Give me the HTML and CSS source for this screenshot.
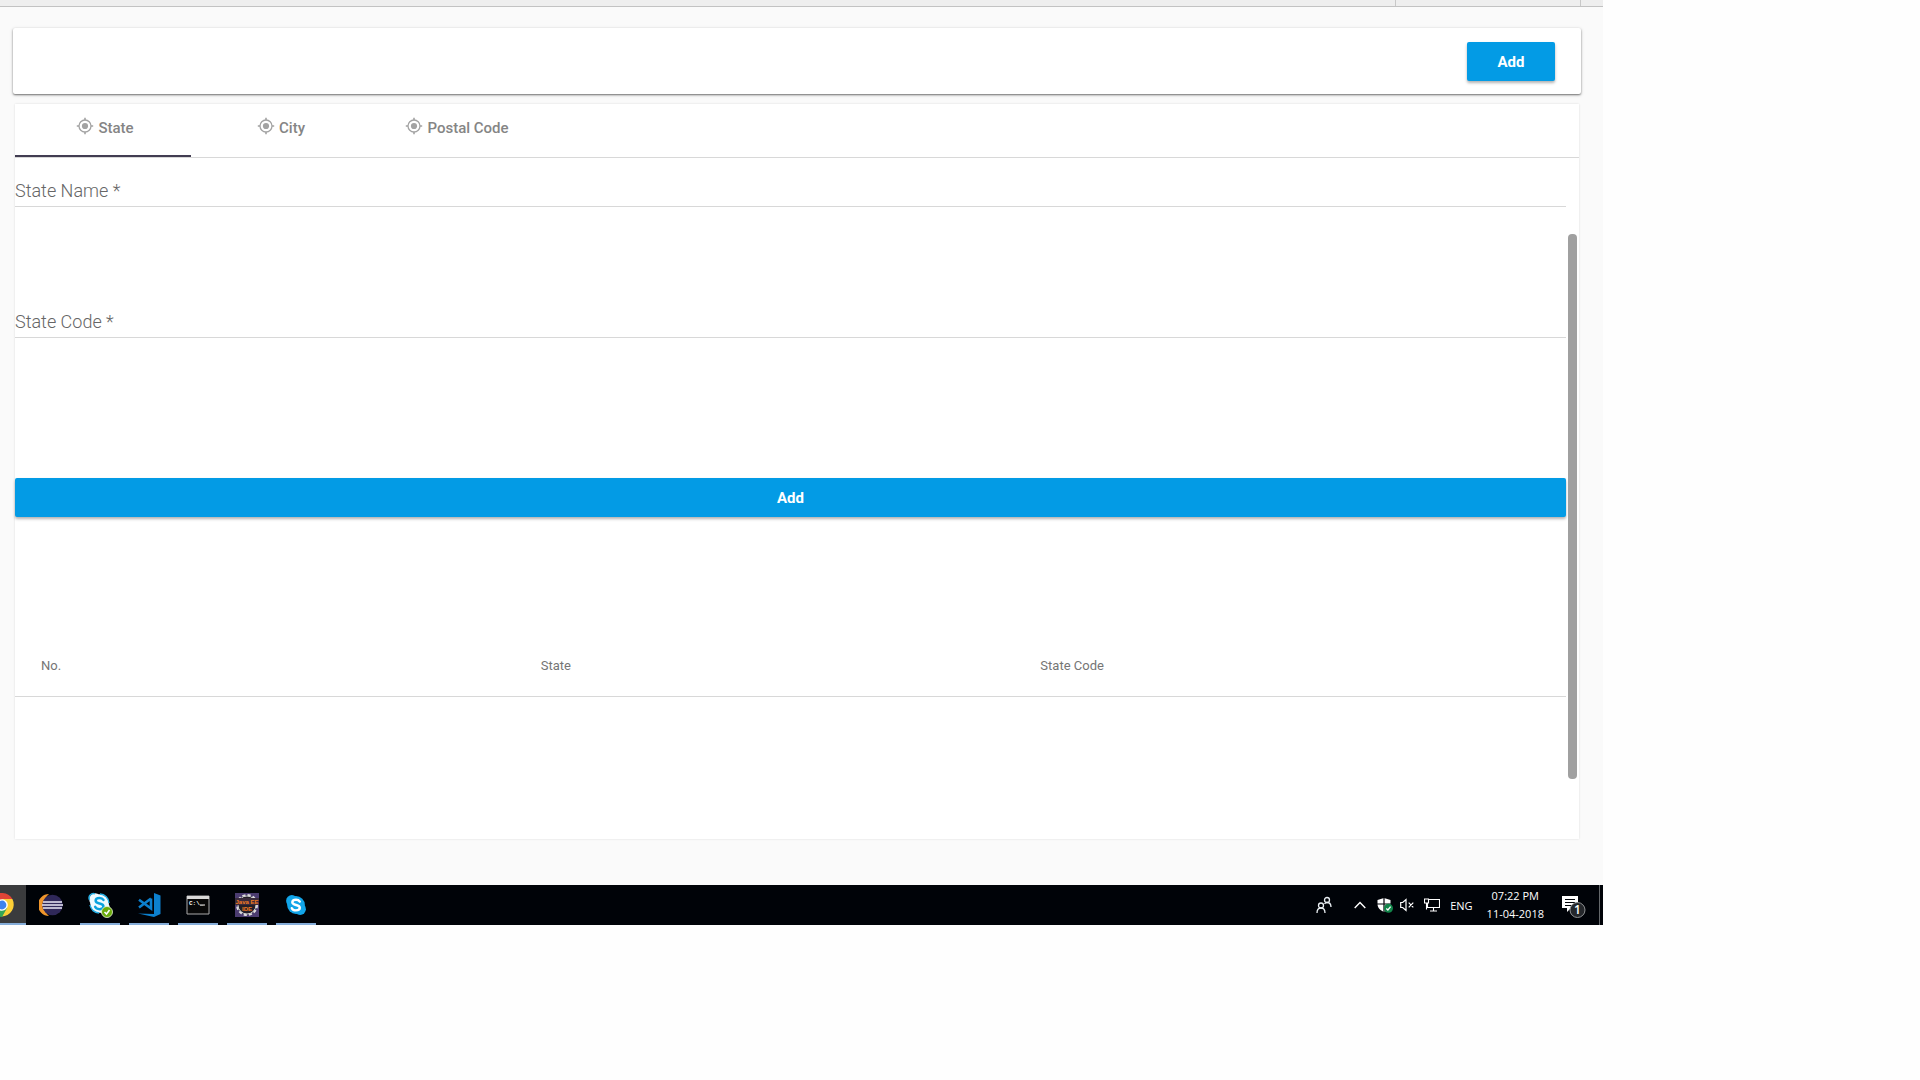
FILE: index.html
```html
<!DOCTYPE html>
<html lang="en">
<head>
<meta charset="utf-8">
<title>State, City and Postal Code</title>
<link rel="stylesheet" href="styles.css">
</head>
<body>
<svg class="defs" aria-hidden="true">
  <symbol id="target" viewBox="0 0 18 18">
    <circle cx="9" cy="9" r="6" fill="none" stroke="currentColor" stroke-width="1.3"/>
    <circle cx="9" cy="9" r="3.1" fill="currentColor"/>
    <path d="M9 .8V3M9 15v2.2M.8 9H3M15 9h2.2" stroke="currentColor" stroke-width="1.6"/>
  </symbol>
  <symbol id="skype" viewBox="0 0 24 24">
    <circle cx="7.5" cy="7.5" r="6.3"/><circle cx="16.5" cy="16.5" r="6.3"/><circle cx="12" cy="12" r="9.7"/>
  </symbol>
  <symbol id="skype-s" viewBox="0 0 24 24">
    <path d="M15.8 8.6C15 7.3 13.700 6.700 12 6.700c-2.200 0-3.700 1-3.700 2.600 0 1.800 1.700 2.200 3.700 2.700s3.800.9 3.800 2.800c0 1.700-1.600 2.600-3.800 2.600-1.900 0-3.500-.7-4.200-2.200" fill="none" stroke-width="2.4" stroke-linecap="round"/>
  </symbol>
</svg>
<div class="screen">
  <div class="strip"><span class="strip-cell"></span><span class="strip-end"></span></div>
  <main class="app">
    <header class="toolbar"><button class="btn" type="button">Add</button></header>
    <section class="panel">
      <div class="tabs" role="tablist">
        <button class="tab active" role="tab" aria-selected="true" type="button"><svg class="tab-icon"><use href="#target"/></svg>State</button>
        <button class="tab" role="tab" aria-selected="false" type="button"><svg class="tab-icon"><use href="#target"/></svg>City</button>
        <button class="tab" role="tab" aria-selected="false" type="button"><svg class="tab-icon"><use href="#target"/></svg>Postal Code</button>
      </div>
      <div class="panel-body">
        <form class="content">
          <div class="field"><label for="state-name">State Name *</label><input id="state-name" type="text"></div>
          <div class="field"><label for="state-code">State Code *</label><input id="state-code" type="text"></div>
          <button class="btn btn-wide" type="button">Add</button>
          <table class="list">
            <thead><tr><th scope="col">No.</th><th scope="col">State</th><th scope="col">State Code</th></tr></thead>
          </table>
        </form>
        <div class="scroll"><div class="thumb"></div></div>
      </div>
    </section>
  </main>
  <footer class="taskbar">
    <button class="task task-chrome" type="button" aria-label="Chrome">
      <svg width="26" height="24" viewBox="0 0 26 24"><path d="M2 12 -8.400 6A12 12 0 0 1 12.400 6Z" fill="#e04436"/><path d="M2 6h10.400A12 12 0 0 1 1.500 23.500L7 14.500Z" fill="#fbce36"/><path d="M2 12 7 15 2 24A12 12 0 0 1-8.400 6Z" fill="#35a556"/><circle cx="2" cy="12" r="5.800" fill="#fff"/><circle cx="2" cy="12" r="4.400" fill="#3f83ee"/></svg>
    </button>
    <button class="task" type="button" aria-label="Eclipse">
      <svg width="24" height="24" viewBox="0 0 24 24"><path d="M10 1A11 11 0 0 0 10 23 14 14 0 0 1 10 1Z" fill="#f0962c"/><circle cx="13.500" cy="12" r="10.300" fill="#2f2859"/><path d="M4 9h19M3 12h21M4 15h19" stroke="#ece9f7" stroke-width="1.600"/></svg>
    </button>
    <button class="task open" type="button" aria-label="Skype for Business">
      <svg width="26" height="26" viewBox="0 0 26 26"><use href="#skype" width="23" height="23" x="1" fill="#effaff"/><use href="#skype-s" width="25" height="25" y="-1" stroke="#08a2df"/><path d="M8 1.800A4.500 4.500 0 0 0 2.500 8M3 13a9.500 9.500 0 0 0 9 8M13 2a9.500 9.500 0 0 1 9 9" fill="none" stroke="#27b2e8" stroke-width="1.400"/><circle cx="20" cy="20" r="5.500" fill="#6bac0b" stroke="#e9f5d7" stroke-width=".8"/><path d="m17.500 20 2 2 3-4" fill="none" stroke="#fff" stroke-width="1.500"/></svg>
    </button>
    <button class="task open" type="button" aria-label="Visual Studio Code">
      <svg width="24" height="24" viewBox="0 0 24 24"><path d="M17 0 23.500 2.500V21L17 24 1 20.500 17 21Z" fill="#0c80ce"/><path d="M14 5.500v10L2 6.800M2 14.500 14 5.500" fill="none" stroke="#0c80ce" stroke-width="2.600"/></svg>
    </button>
    <button class="task open" type="button" aria-label="Command Prompt">
      <svg width="24" height="20" viewBox="0 0 24 20"><path d="M1 1h22v18H1z" fill="#080808" stroke="#aaa"/><path d="M1 1h22v3H1z" fill="#d8d8d8"/><text x="3" y="10" class="prompt">C:\_</text><path d="M14 10h5" stroke="#eee"/></svg>
    </button>
    <button class="task open" type="button" aria-label="Java EE IDE">
      <svg width="24" height="24" viewBox="0 0 24 24"><path d="M0 0h24v24H0z" fill="#4b3c70"/><circle cx="12" cy="12" r="9.500" fill="#222" stroke="#ddd" stroke-width="3" stroke-dasharray="3 2"/><circle cx="12" cy="12" r="9" fill="#241f28" stroke="#ccc"/><path d="M0 5h24v7H0z" fill="#3a2b3c"/><text x="12" y="11" class="java">Java EE</text><text x="12" y="18" class="java">IDE</text></svg>
    </button>
    <button class="task open" type="button" aria-label="Skype">
      <svg width="24" height="24" viewBox="0 0 24 24"><use href="#skype" width="22" height="22" x="1" y="1" fill="#12a5e9"/><use href="#skype-s" width="24" height="24" stroke="#fff"/></svg>
    </button>
    <div class="tray">
      <svg class="people" width="16" height="18" viewBox="0 0 16 18"><g fill="none" stroke="#e8eef2" stroke-width="1.300"><circle cx="5" cy="9.500" r="2.500"/><path d="M1 17c0-3 1.500-5 4-5s4 2 4 5"/><circle cx="11" cy="4" r="2.500"/><path d="M8.500 8c.7-1 1.500-1.500 2.500-1.500 2.500 0 4 2 4 4.500"/></g></svg>
      <svg class="chevron" width="12" height="8" viewBox="0 0 12 8"><path d="m.7 7 5.300-5.500L11.300 7" fill="none" stroke="#fff" stroke-width="1.400"/></svg>
      <svg class="shield" width="16" height="16" viewBox="0 0 16 16"><path d="M7 1 .500 3v4c0 3.500 2.500 6.500 6.500 8 4-1.500 6.500-4.500 6.500-8V3Z" fill="#fff"/><path d="M7 0v15M0 7h14" stroke="#000308" stroke-width="1.200"/><circle cx="11.500" cy="11.300" r="4.500" fill="#12854a"/><path d="m9.300 11.500 1.600 1.500 2.700-3.300" fill="none" stroke="#fff" stroke-width="1.300"/></svg>
      <svg class="speaker" width="14" height="14" viewBox="0 0 14 14"><path d="M.700 4.500h2L6 1.500v11L2.700 9.500h-2ZM8.700 4.700l4.600 4.600m0-4.600L8.700 9.300" fill="none" stroke="#fff" stroke-width="1.200"/></svg>
      <svg class="monitor" width="16" height="14" viewBox="0 0 16 14"><path d="M5 1.500h10.500v8H3.500V5M9.500 9.500v3.500M6 13h7M.500 1h4v4h-4zM2.500 5v6.500" fill="none" stroke="#fff" stroke-width="1.100"/></svg>
      <span class="lang">ENG</span>
      <time class="clock"><span>07:22 PM</span><span>11-04-2018</span></time>
      <svg width="24" height="26" viewBox="0 0 24 26"><path d="M0 4h16v12H9l-4 4v-4H0z" fill="#fff"/><path d="M3 7.500h10M3 10.500h10M3 13.500h7" stroke="#000308" stroke-width="1.200"/><circle cx="15.500" cy="18" r="7.500" fill="#24272b" stroke="#8f9294"/><text x="15.500" y="22" class="badge">1</text></svg>
    </div>
  </footer>
</div>
</body>
</html>
```
FILE: styles.css
```css
* { box-sizing: border-box; }
body { margin: 0; background: #fefefe; font-family: Roboto, sans-serif; color: #757575; }
button { border: 0; font-family: inherit; cursor: pointer; }
svg { display: block; flex: none; }
.defs { position: absolute; width: 0; height: 0; }
.screen { margin-right: 317px; }

.strip { display: flex; justify-content: flex-end; height: 7px; background: #eee; border-bottom: 1px solid #c2c2c2; }
.strip-cell { width: 186px; border: solid #c8c8c8; border-width: 0 1px; }
.strip-end { width: 22px; }

.app { padding: 21px 22px 46px 13px; background: #fafafa; }
.toolbar { display: flex; justify-content: flex-end; padding: 14px 26px 13px; background: #fff; border-radius: 2px; box-shadow: 0 1px 2px rgba(0,0,0,.5), 0 1px 4px rgba(0,0,0,.12); }
.btn { width: 88px; height: 39px; padding: 0; border-radius: 2px; background: #039be5; color: #fff; font-size: 15px; font-weight: 700; box-shadow: 0 2px 3px rgba(0,0,0,.3); }
.btn-wide { width: 100%; margin-top: 10px; }

.panel { margin: 10px 2px 0; background: #fff; box-shadow: 0 0 2px rgba(0,0,0,.12); }
.tabs { display: flex; height: 54px; border-bottom: 1px solid #d8d8d8; }
.tab { display: flex; align-items: flex-start; justify-content: center; gap: 4px; width: 176px; padding: 13px 0 0 4px; background: none; color: #858585; font-size: 15px; font-weight: 500; line-height: 22px; }
.tab.active { border-bottom: 2px solid #423d52; }
.tab-icon { width: 18px; height: 18px; color: #a3a3a3; }

.panel-body { display: flex; min-height: 681px; }
.content { flex: 1; }
.field { display: grid; height: 131px; padding-top: 20px; align-content: start; }
.field label, .field input { grid-area: 1 / 1; }
.field label { font-size: 18px; font-weight: 300; line-height: 26px; color: #666; pointer-events: none; }
.field input { width: 100%; height: 29px; padding: 0; border: 0; border-bottom: 1px solid #d8d8d8; background: none; font: inherit; outline: 0; }
.field + .btn-wide { margin-top: 58px; }

.list { display: block; margin-top: 118px; }
.list thead { display: block; }
.list tr { display: flex; padding: 0 26px; height: 62px; border-bottom: 1px solid #d8d8d8; }
.list th { flex: 1; padding: 0; text-align: left; font-size: 13px; font-weight: 400; line-height: 62px; }
.scroll { width: 13px; padding: 76px 2px 0; }
.thumb { height: 545px; border-radius: 4px; background: #a0a0a0; }

.taskbar { display: flex; gap: 9px; height: 40px; background: #000308; color: #fff; }
.task { display: flex; align-items: center; justify-content: center; width: 40px; padding: 2px 0 0; background: none; border-bottom: 2px solid transparent; }
.task.open { border-color: #85add9; }
.task-chrome { width: 26px; margin-right: -4px; background: #3a3b3d; border-color: #85add9; }
.prompt { fill: #fff; font: 700 6px "Liberation Mono", monospace; }
.java { fill: #f47b20; font: 700 6px "Liberation Sans", sans-serif; text-anchor: middle; }
.badge { fill: #fff; font: 600 12px "Open Sans", sans-serif; text-anchor: middle; }
.tray { display: flex; align-items: center; margin-left: auto; margin-right: 3px; padding-right: 13px; border-right: 1px solid #64686b; font-family: "Open Sans", sans-serif; font-size: 11px; }
.people { margin-right: 22px; }
.chevron { margin-right: 11px; }
.shield { margin-right: 7px; }
.speaker { margin-right: 10px; }
.monitor { margin-right: 10px; }
.lang { margin-right: 14px; }
.clock { display: flex; flex-direction: column; align-items: center; margin-right: 18px; line-height: 18px; }
```
